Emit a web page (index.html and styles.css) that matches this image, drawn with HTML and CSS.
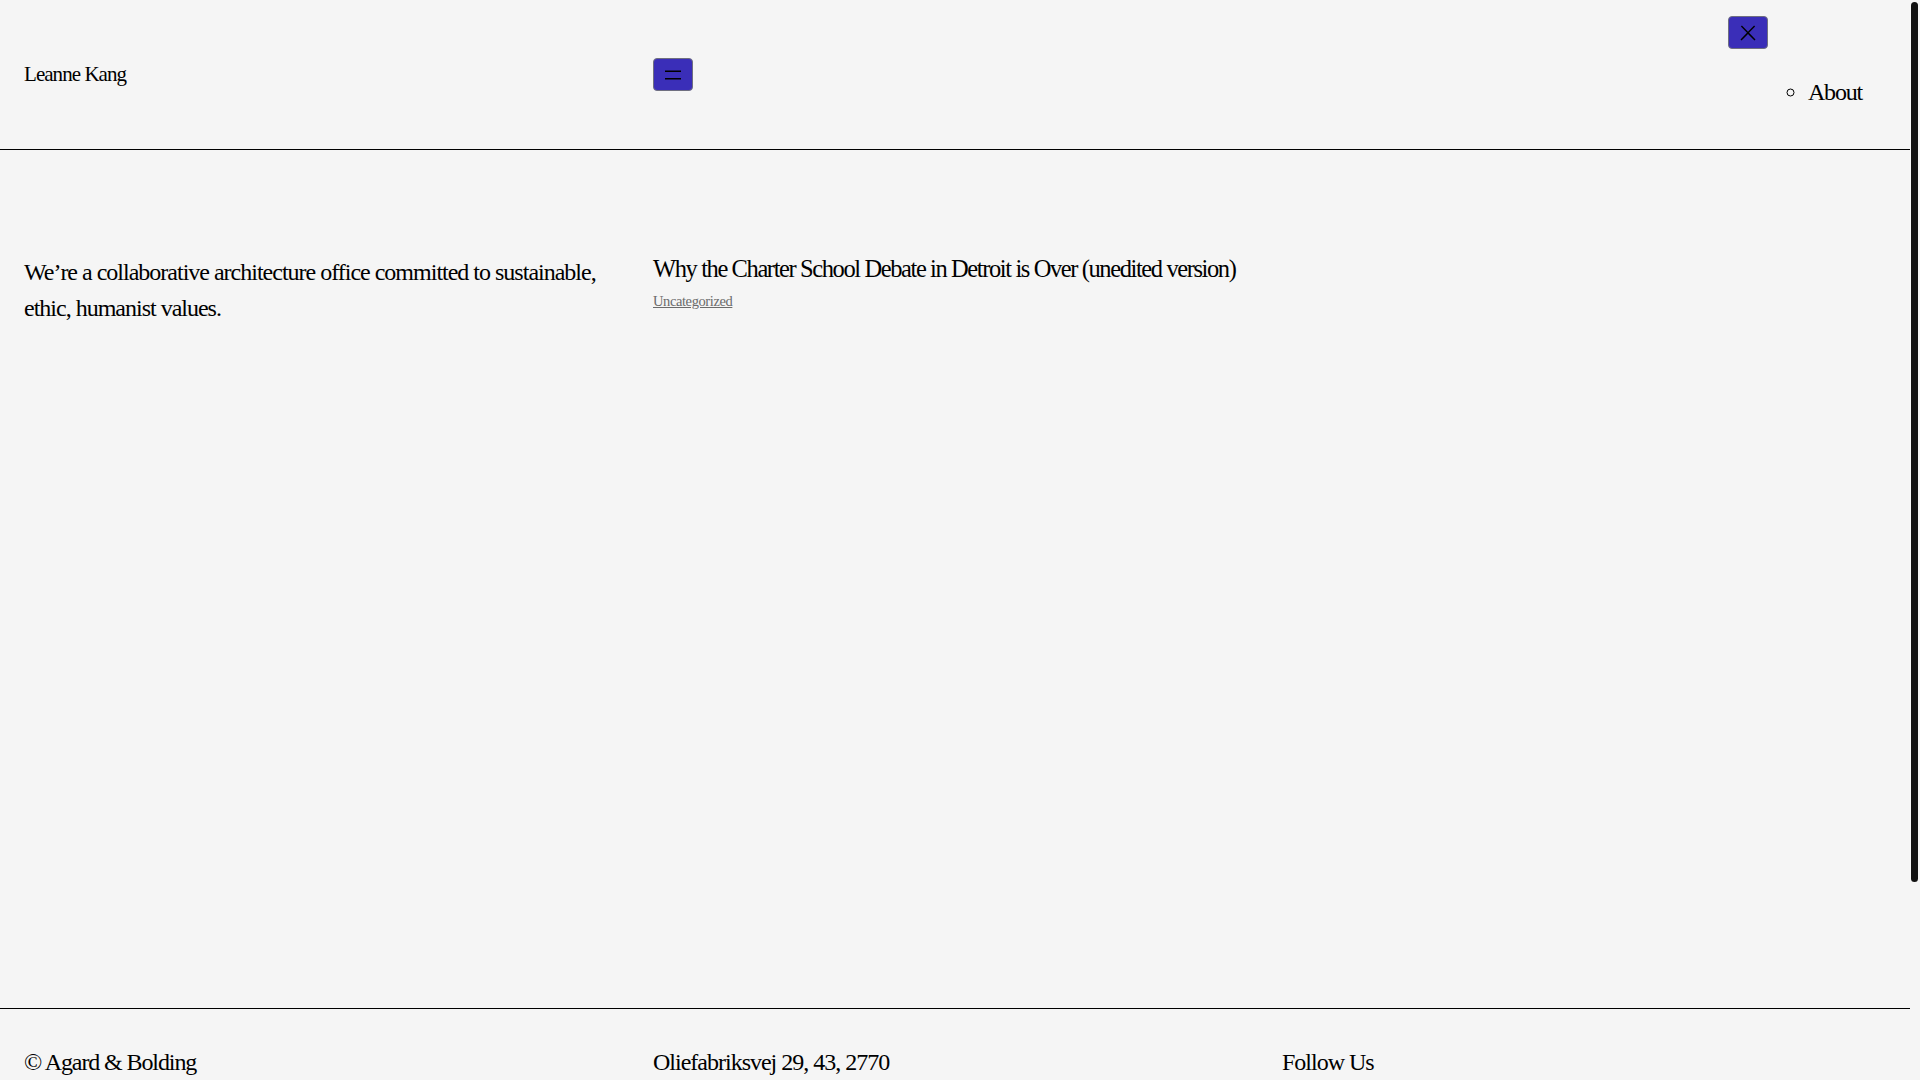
FILE: index.html
```html
<!DOCTYPE html>
<html lang="en">
<head>
<meta charset="utf-8">
<title>Leanne Kang</title>
<link rel="stylesheet" href="styles.css">
</head>
<body>
<div class="page">
  <header class="site-header">
    <div class="brand"><a class="brand-link" href="#">Leanne Kang</a></div>
    <div class="nav-toggle">
      <button class="icon-btn" aria-label="Open menu">
        <svg width="24" height="24" viewBox="0 0 24 24" aria-hidden="true"><rect x="4" y="7.5" width="16" height="1.5"></rect><rect x="4" y="15" width="16" height="1.5"></rect></svg>
      </button>
    </div>
    <div class="nav-overlay">
      <button class="icon-btn" aria-label="Close menu">
        <svg width="24" height="24" viewBox="0 0 24 24" aria-hidden="true"><path d="M13 11.8l6.1-6.3-1-1-6.1 6.2-6.1-6.2-1 1 6.1 6.3-6.5 6.7 1 1 6.5-6.6 6.5 6.6 1-1z"></path></svg>
      </button>
      <ul class="nav-list">
        <li class="nav-item"><a href="#" class="nav-link">About</a></li>
      </ul>
    </div>
  </header>

  <main class="site-main">
    <p class="tagline">We’re a collaborative architecture office committed to sustainable, ethic, humanist values.</p>
    <article class="post">
      <h2 class="post-title"><a href="#">Why the Charter School Debate in Detroit is Over (unedited version)</a></h2>
      <div class="post-cats"><a href="#">Uncategorized</a></div>
    </article>
  </main>

  <footer class="site-footer">
    <p class="footer-text footer-copy">© Agard &amp; Bolding</p>
    <p class="footer-text">Oliefabriksvej 29, 43, 2770</p>
    <p class="footer-text">Follow Us</p>
  </footer>
</div>
<div class="scroll-thumb" aria-hidden="true"></div>
</body>
</html>
```

FILE: styles.css
```css
html {
  background: #f5f5f5;
}

body {
  margin: 0;
  background: #f5f5f5;
  color: #000;
  font-family: "Liberation Serif", "Times New Roman", serif;
  font-size: 24px;
  line-height: 1.48;
  letter-spacing: -1px;
}

.page {
  width: 1910px;
}

.scroll-thumb {
  position: fixed;
  top: 2px;
  right: 2px;
  width: 7px;
  height: 880px;
  border-radius: 4px;
  background: #111;
}

a {
  color: inherit;
  text-decoration: none;
}

.site-header {
  display: grid;
  grid-template-columns: repeat(3, 1fr);
  column-gap: 25px;
  padding: 0 24px;
  height: 149px;
  border-bottom: 1px solid #000;
  align-items: center;
}

.brand {
  font-size: 21px;
  line-height: 1.4;
  letter-spacing: -0.95px;
}

.nav-toggle {
  display: flex;
}

.icon-btn {
  display: flex;
  align-items: center;
  justify-content: center;
  width: 40px;
  height: 33px;
  padding: 0;
  margin: 0;
  background: #3a2eb8;
  border: 1px solid #6f6f80;
  border-radius: 4px;
  color: #000;
}

.icon-btn svg {
  fill: currentColor;
  display: block;
}

.nav-overlay {
  align-self: start;
  justify-self: end;
  display: flex;
  flex-direction: column;
  align-items: flex-start;
  padding-top: 16px;
}

.nav-list {
  list-style-type: circle;
  margin: 26px 24px 0 40px;
  padding-left: 40px;
}

.nav-item {
  letter-spacing: -1.2px;
}

.site-main {
  display: grid;
  grid-template-columns: repeat(3, 1fr);
  column-gap: 25px;
  align-items: start;
  padding: 104px 24px 0;
  height: 754px;
}

.tagline {
  margin: 1px 0 0;
}

.post-title {
  margin: 0;
  font-size: 24.5px;
  font-weight: normal;
  line-height: 1.2;
  letter-spacing: -1.4px;
}

.post-cats {
  margin-top: 8px;
  font-size: 14.5px;
  line-height: 1.5;
  letter-spacing: -0.4px;
}

.post-cats a {
  color: #6b6b6b;
  text-decoration: underline;
}

.site-footer {
  display: grid;
  grid-template-columns: repeat(3, 1fr);
  column-gap: 25px;
  padding: 36px 24px 240px;
  border-top: 1px solid #000;
}

.footer-text {
  margin: 0;
}

.footer-copy {
  letter-spacing: -1.1px;
}
```
